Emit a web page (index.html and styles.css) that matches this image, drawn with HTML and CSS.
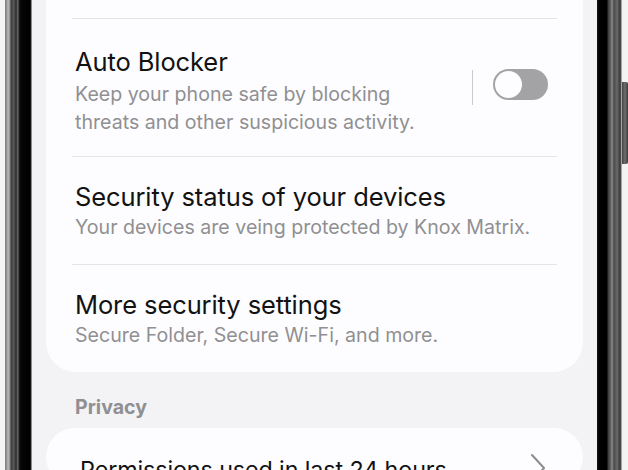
FILE: index.html
```html
<!DOCTYPE html>
<html lang="en">
<head>
<meta charset="utf-8">
<title>Security and privacy</title>
<link rel="stylesheet" href="styles.css">
</head>
<body>
<div class="device">
  <div class="bezel bezel-left"></div>
  <main class="screen">
    <section class="card card-top">
      <div class="row row-toggle">
        <div class="text">
          <div class="title">Auto Blocker</div>
          <div class="sub">Keep your phone safe by blocking<br>threats and other suspicious activity.</div>
        </div>
        <span class="vdivider"></span>
        <span class="switch"><span class="knob"></span></span>
      </div>
      <div class="row">
        <div class="text">
          <div class="title">Security status of your devices</div>
          <div class="sub">Your devices are veing protected by Knox Matrix.</div>
        </div>
      </div>
      <div class="row">
        <div class="text">
          <div class="title">More security settings</div>
          <div class="sub">Secure Folder, Secure Wi-Fi, and more.</div>
        </div>
      </div>
    </section>
    <div class="section-label">Privacy</div>
    <section class="card card-next">
      <div class="row row-link">
        <div class="title">Permissions used in last 24 hours</div>
        <svg class="chevron" width="18" height="30" viewBox="0 0 18 30"><path d="M3 2 L15 15 L3 28" fill="none" stroke="#8c8c8c" stroke-width="2" stroke-linecap="round" stroke-linejoin="round"/></svg>
      </div>
    </section>
  </main>
  <div class="bezel bezel-right"><span class="side-key"></span></div>
</div>
</body>
</html>
```

FILE: styles.css
```css
* { box-sizing: border-box; }
html, body { margin: 0; padding: 0; }
body {
  width: 628px;
  height: 470px;
  overflow: hidden;
  background: #f6f6f6;
  font-family: Inter, Roboto, "Noto Sans", Arial, sans-serif;
}
.device {
  display: flex;
  width: 628px;
  height: 470px;
}
.bezel-left {
  width: 32px;
  flex: none;
  background: linear-gradient(to right,
    #f4f4f4 0, #f4f4f4 5px,
    #7a7a7a 5px, #9a9a9a 7px,
    #bdbdbd 8px, #8c8c8c 10px,
    #3d3d3d 11px, #5a5a5a 14px,
    #2a2a2a 16px, #6e6e6e 18px,
    #1c1c1c 19px, #050505 21px,
    #000 30px, #2a2a2a 31px, #e8e8ea 32px);
}
.bezel-right {
  width: 31px;
  flex: none;
  padding-top: 82px;
  display: flex;
  justify-content: flex-end;
  background: linear-gradient(to right,
    #1a1a1a 0, #000 2px,
    #000 10px, #3a3a3a 11px,
    #555 13px, #8a8a8a 15px,
    #4a4a4a 17px, #6a6a6a 20px,
    #3a3a3a 23px, #555 24px,
    #f2f2f2 25px, #f4f4f4 31px);
}
.side-key {
  display: block;
  width: 6px;
  height: 82px;
  background: linear-gradient(to right, #444, #6e6e6e 50%, #3a3a3a);
  border-radius: 0 2px 2px 0;
}
.screen {
  flex: 1;
  background: #f3f3f5;
  padding: 0 14px;
  overflow: hidden;
}
.card {
  background: #fdfdff;
  border-radius: 30px;
  padding: 0 26px;
}
.card-top {
  border-radius: 0 0 30px 30px;
  padding-top: 18px;
}
.row {
  display: flex;
  align-items: center;
  border-top: 1px solid #e4e4e7;
  padding: 24px 0 23px 3px;
}
.row-toggle {
  align-items: flex-start;
  padding-top: 27px;
  padding-bottom: 20px;
}
.row-toggle .sub { margin-top: 2px; }
.text { flex: 1; min-width: 0; }
.title {
  font-size: 25.5px;
  line-height: 32px;
  color: #121212;
  letter-spacing: -0.1px;
  white-space: nowrap;
}
.sub {
  font-size: 19.6px;
  line-height: 28px;
  color: #909092;
  white-space: nowrap;
}
.vdivider {
  width: 1.5px;
  height: 35px;
  background: #cacaca;
  margin: 24px 20px 0 0;
}
.switch {
  width: 55px;
  height: 31px;
  border-radius: 16px;
  background: #a3a3a5;
  padding: 2px;
  margin: 23px 9px 0 0;
  display: flex;
  align-items: center;
}
.knob {
  width: 27px;
  height: 27px;
  border-radius: 50%;
  background: #fdfdff;
}
.section-label {
  font-size: 19.6px;
  line-height: 28px;
  font-weight: 700;
  color: #8f8f92;
  padding: 21px 0 7px 29px;
}
.card-next .row {
  border-top: none;
  padding: 26px 0 0 8px;
}
.row-link .title {
  flex: 1;
  font-size: 23.3px;
}
.chevron { margin-right: 10px; margin-top: -4px; }
```
